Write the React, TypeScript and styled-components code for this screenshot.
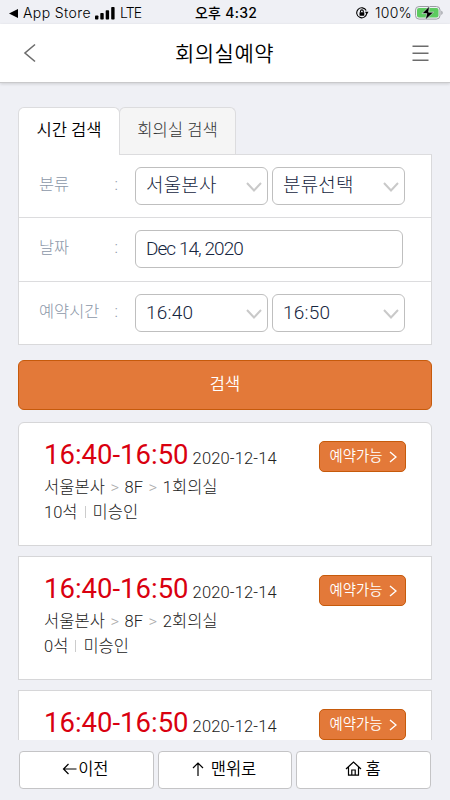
import React from 'react';
import styled, { createGlobalStyle } from 'styled-components';

const GlobalStyle = createGlobalStyle`
  * { box-sizing: border-box; }
  body {
    margin: 0;
    background: #eff0f5;
    font-family: Roboto, "Noto Sans CJK KR", sans-serif;
    font-weight: 300;
    color: #222;
  }
`;

const Screen = styled.div`
  width: 450px;
  height: 800px;
  overflow: hidden;
  display: flex;
  flex-direction: column;
  background: #eff0f5;
`;

const StatusBar = styled.div`
  height: 24px;
  flex: none;
  display: grid;
  grid-template-columns: 1fr auto 1fr;
  align-items: center;
  padding: 0 7px 0 9px;
  color: #000;
  font: 400 14px/24px Inter, "Noto Sans CJK KR", sans-serif;
`;

const StatusGroup = styled.div<{ $end?: boolean }>`
  display: flex;
  align-items: center;
  height: 24px;
  justify-content: ${(p) => (p.$end ? 'flex-end' : 'flex-start')};
  white-space: nowrap;
  svg { flex: none; }
`;

const StatusText = styled.span<{ $left?: number; $spacing?: number }>`
  margin-left: ${(p) => p.$left ?? 0}px;
  letter-spacing: ${(p) => p.$spacing ?? 0}px;
  font-weight: 300;
  line-height: 26px;
`;

const SignalIcon = styled.svg`
  margin-left: 4px;
`;

const BatteryIcon = styled.svg`
  margin-left: 3px;
`;

const Clock = styled.div`
  font-weight: 500;
  font-size: 14px;
  line-height: 26px;
  letter-spacing: 0.25px;
`;

const Header = styled.header`
  height: 59px;
  flex: none;
  display: flex;
  align-items: center;
  justify-content: space-between;
  padding: 0 21px 0 23px;
  background: #fff;
  border-bottom: 1px solid #c9c9cb;
  box-shadow: 0 1px 3px rgba(0, 0, 0, 0.14);
`;

const Title = styled.h1`
  margin: 2px 0 0;
  font-size: 21px;
  font-weight: 350;
  line-height: 58px;
  letter-spacing: 0.5px;
  color: #000;
`;

const Content = styled.main`
  height: 657px;
  flex: none;
  overflow: hidden;
  padding: 24px 18px 0;
`;

const Tabs = styled.div`
  display: flex;
  height: 47px;
`;

const Tab = styled.div<{ $active?: boolean }>`
  width: ${(p) => (p.$active ? 102 : 117)}px;
  height: ${(p) => (p.$active ? 48 : 47)}px;
  margin-right: ${(p) => (p.$active ? -1 : 0)}px;
  z-index: ${(p) => (p.$active ? 1 : 0)};
  position: relative;
  border: 1px solid #dcdcde;
  border-bottom: 0;
  border-radius: 6px 6px 0 0;
  background: ${(p) => (p.$active ? '#fff' : '#f5f5f5')};
  color: ${(p) => (p.$active ? '#000' : '#333')};
  font-size: 16.6px;
  font-weight: ${(p) => (p.$active ? 350 : 300)};
  line-height: 46px;
  text-align: center;
  white-space: nowrap;
`;

const Form = styled.section`
  height: 191px;
  border: 1px solid #d9d9db;
  border-top-color: #dcdcde;
  background: #fff;
`;

const FormRow = styled.div`
  height: 64px;
  display: grid;
  grid-template-columns: 75.5px 20.5px 270px;
  padding: 12px 0 0 20px;
  border-top: 1px solid #dcdcde;
  &:first-child {
    height: 62px;
    border-top: 0;
  }
`;

const Label = styled.div`
  font-size: 16.4px;
  line-height: 35px;
  color: #8c97a8;
  white-space: nowrap;
`;

const Fields = styled.div`
  display: flex;
  gap: 4px;
`;

const Field = styled.div<{ $wide?: boolean }>`
  width: ${(p) => (p.$wide ? 268 : 133)}px;
  height: 38px;
  display: flex;
  align-items: center;
  justify-content: space-between;
  padding: 0 5px 0 10px;
  border: 1px solid #bfbfbf;
  border-radius: 6px;
  background: #fff;
  color: #162640;
  font-size: 19px;
  line-height: 36px;
  letter-spacing: ${(p) => (p.$wide ? -0.95 : 0.2)}px;
  svg { margin-top: 1px; }
`;

const SearchButton = styled.button`
  display: block;
  width: 100%;
  height: 50px;
  margin-top: 15px;
  padding: 0 0 1px;
  border: 1px solid #c65a0b;
  border-radius: 6px;
  background: #e37939;
  color: #fff;
  font: 350 16.5px/47px Roboto, "Noto Sans CJK KR", sans-serif;
`;

const CardList = styled.div`
  display: flex;
  flex-direction: column;
  gap: 10px;
  margin-top: 12px;
`;

const Card = styled.article`
  height: 124px;
  flex: none;
  display: flex;
  justify-content: space-between;
  padding: 18px 25px 0;
  border: 1px solid #d6d6d8;
  background: #fff;
  &:first-child { border-radius: 6px 6px 0 0; }
`;

const TimeLine = styled.div`
  display: flex;
  align-items: baseline;
  height: 34px;
  white-space: nowrap;
`;

const Time = styled.span`
  color: #d9000f;
  font-size: 27.5px;
  font-weight: 400;
  line-height: 28px;
`;

const DateText = styled.span`
  margin-left: 4px;
  font-size: 16.5px;
  letter-spacing: 0.15px;
`;

const Detail = styled.div`
  font-size: 16.5px;
  line-height: 25px;
  height: 25px;
  word-spacing: 1.5px;
  letter-spacing: 0.03px;
  white-space: nowrap;
`;

const Muted = styled.span`
  color: #aaa;
`;

const Divider = styled.i`
  display: inline-block;
  width: 1px;
  height: 12px;
  margin: 0 7px;
  background: #ccc;
`;

const BookButton = styled.button`
  width: 87px;
  height: 31px;
  display: flex;
  align-items: center;
  justify-content: space-between;
  padding: 0 8px 0 9.5px;
  border: 1px solid #c65a0b;
  border-radius: 5px;
  background: #e37939;
  color: #fff;
  font: 350 14.4px/29px Roboto, "Noto Sans CJK KR", sans-serif;
  white-space: nowrap;
`;

const Footer = styled.nav`
  display: grid;
  grid-template-columns: repeat(3, 1fr);
  gap: 4px;
  padding: 11px 19px 0 19px;
`;

const FooterButton = styled.button<{ $gap: number }>`
  height: 38px;
  display: flex;
  align-items: center;
  justify-content: center;
  gap: ${(p) => p.$gap}px;
  padding: 0 2px 1px 0;
  border: 1px solid #c4c4c6;
  border-radius: 4px;
  background: #fff;
  color: #000;
  font: 350 16.5px/34px Roboto, "Noto Sans CJK KR", sans-serif;
  svg { margin-bottom: 2px; }
`;

const Chevron = () => (
  <svg width="16" height="10" viewBox="0 0 16 10" fill="none" stroke="#c9c9c9" strokeWidth="2">
    <path d="M1 1l7 7.5L15 1" />
  </svg>
);

const Select = ({ value }: { value: string }) => (
  <Field><span>{value}</span><Chevron /></Field>
);

type Slot = { id: number; room?: string; seats?: string };

const slots: Slot[] = [
  { id: 1, room: '1회의실', seats: '10석' },
  { id: 2, room: '2회의실', seats: '0석' },
  { id: 3 },
];

export default function App() {
  return (
    <Screen>
      <GlobalStyle />
      <StatusBar>
        <StatusGroup>
          <svg width="9" height="9" viewBox="0 0 9 9"><path d="M0 4.5L9 0v9z" /></svg>
          <StatusText $left={5} $spacing={0.4}>App Store</StatusText>
          <SignalIcon width="20" height="13" viewBox="0 0 20 13">
            <rect x="0" y="8.5" width="3.4" height="4" rx=".8" />
            <rect x="5.3" y="6" width="3.4" height="6.5" rx=".8" />
            <rect x="10.7" y="3.2" width="3.4" height="9.3" rx=".8" />
            <rect x="16.2" y="0" width="3.4" height="12.5" rx=".8" />
          </SignalIcon>
          <StatusText $left={5} $spacing={-0.8}>LTE</StatusText>
        </StatusGroup>
        <Clock>오후 4:32</Clock>
        <StatusGroup $end>
          <svg width="13" height="12" viewBox="0 0 13 12" fill="none" stroke="#000" strokeWidth="1.1">
            <path d="M10.7 6.2A5 5 0 1 1 10.2 3.6" />
            <path d="M8.9 4.8h3.6L10.8 7.4z" fill="#000" stroke="none" />
            <rect x="3.5" y="5.2" width="4.8" height="3.5" rx=".4" fill="#000" stroke="none" />
            <path d="M4.5 5.4V4.3a1.4 1.4 0 0 1 2.8 0v1.1" />
          </svg>
          <StatusText $left={6} $spacing={0.3}>100%</StatusText>
          <BatteryIcon width="28" height="14" viewBox="0 0 28 14">
            <rect x=".5" y=".5" width="24.5" height="12.6" rx="3.6" fill="none" stroke="#9b9da2" />
            <rect x="2" y="2" width="21.5" height="9.6" rx="2" fill="#5dcb60" />
            <path d="M26.3 4.7c1.8.5 1.8 3.7 0 4.2z" fill="#9b9da2" />
            <path d="M14.5 0L7 7.6h4.8L10.3 14 18.6 6.2h-5z" fill="#000" stroke="#eff0f5" strokeWidth=".6" />
          </BatteryIcon>
        </StatusGroup>
      </StatusBar>

      <Header>
        <svg width="14" height="20" viewBox="0 0 14 20" fill="none" stroke="#6c6c6c" strokeWidth="1.6">
          <path d="M12 1.5L2 10l10 8.5" />
        </svg>
        <Title>회의실예약</Title>
        <svg width="17" height="18" viewBox="0 0 17 18" stroke="#6c6c6c" strokeWidth="1.5">
          <path d="M.5 2.3h16M.5 9.3h16M.5 16.3h16" />
        </svg>
      </Header>

      <Content>
        <Tabs>
          <Tab $active>시간 검색</Tab>
          <Tab>회의실 검색</Tab>
        </Tabs>
        <Form>
          <FormRow>
            <Label>분류</Label><Label>:</Label>
            <Fields><Select value="서울본사" /><Select value="분류선택" /></Fields>
          </FormRow>
          <FormRow>
            <Label>날짜</Label><Label>:</Label>
            <Fields><Field $wide>Dec 14, 2020</Field></Fields>
          </FormRow>
          <FormRow>
            <Label>예약시간</Label><Label>:</Label>
            <Fields><Select value="16:40" /><Select value="16:50" /></Fields>
          </FormRow>
        </Form>
        <SearchButton>검색</SearchButton>
        <CardList>
          {slots.map((slot) => (
            <Card key={slot.id}>
              <div>
                <TimeLine><Time>16:40-16:50</Time><DateText>2020-12-14</DateText></TimeLine>
                {slot.room && (
                  <>
                    <Detail>서울본사 <Muted>&gt;</Muted> 8F <Muted>&gt;</Muted> {slot.room}</Detail>
                    <Detail>{slot.seats}<Divider />미승인</Detail>
                  </>
                )}
              </div>
              <BookButton>
                예약가능
                <svg width="8" height="12" viewBox="0 0 8 12" fill="none" stroke="#fff" strokeWidth="1.4">
                  <path d="M1 1l6 5-6 5" />
                </svg>
              </BookButton>
            </Card>
          ))}
        </CardList>
      </Content>

      <Footer>
        <FooterButton $gap={1}>
          <svg width="15" height="12" viewBox="0 0 15 12" fill="none" stroke="#000" strokeWidth="1.2">
            <path d="M6.5 1L1.5 6l5 5M1.5 6h13" />
          </svg>
          이전
        </FooterButton>
        <FooterButton $gap={7}>
          <svg width="12" height="14" viewBox="0 0 12 14" fill="none" stroke="#000" strokeWidth="1.2">
            <path d="M1 6l5-5 5 5M6 1v13" />
          </svg>
          맨위로
        </FooterButton>
        <FooterButton $gap={4}>
          <svg width="17" height="15" viewBox="0 0 17 15" fill="none" stroke="#000" strokeWidth="1.2">
            <path d="M1 8l7.5-7L16 8M3.5 6.2v7.9h10V6.2M6.8 14V9h3.4v5" />
          </svg>
          홈
        </FooterButton>
      </Footer>
    </Screen>
  );
}
